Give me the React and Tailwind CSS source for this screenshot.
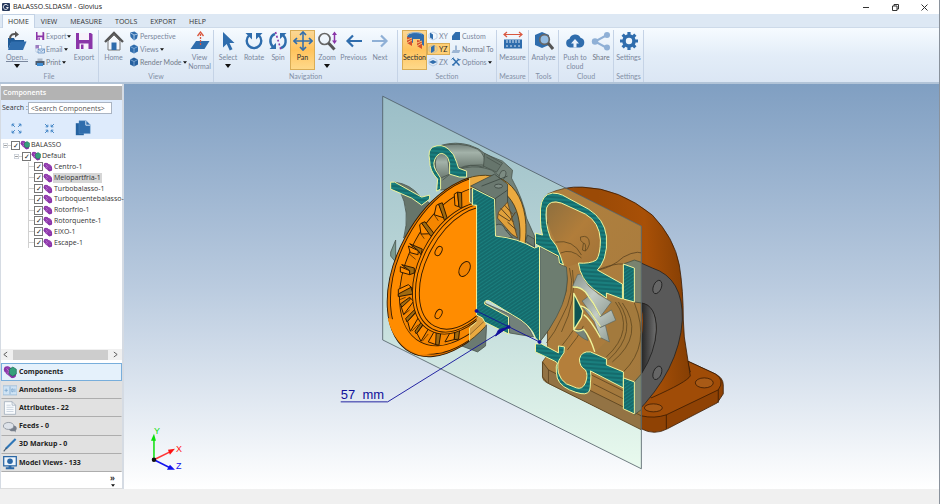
import { useState } from 'react';
import clsx from 'clsx';

const BLUE = '#2f6dad';
const PURPLE = '#8a35a8';

const tabs = ['HOME', 'VIEW', 'MEASURE', 'TOOLS', 'EXPORT', 'HELP'];

const parts = [
  'Centro-1',
  'Meiopartfria-1',
  'Turbobalasso-1',
  'Turboquentebalasso-',
  'Rotorfrio-1',
  'Rotorquente-1',
  'EIXO-1',
  'Escape-1',
];

/* ---------- icons ---------- */

const Svg = ({ size = 'size-5', box = 20, children }) => (
  <svg viewBox={`0 0 ${box} ${box}`} className={clsx('shrink-0', size)} fill="none" aria-hidden="true">
    {children}
  </svg>
);

const FolderIcon = () => (
  <Svg>
    <path d="M1 7h6l1 2h9v3H4L1 18z" fill="#1f5a96" />
    <path d="M4 10.500h15.500L16 19H1z" fill={BLUE} />
    <path d="M3 8C3 3.500 6 2.500 9 3" stroke="#555" strokeWidth="2" />
    <path d="M8 0l4 3.500L8 6.500z" fill="#555" />
  </Svg>
);

const SaveIcon = ({ size }) => (
  <Svg size={size}>
    <path d="M2 2h15l1.500 1.500V18H2z" fill={PURPLE} />
    <path d="M5 2h10v7H5z" fill="#f7f2fb" />
    <path d="M5.500 12.500h9V18h-9z" fill="#f7f2fb" />
    <path d="M7 13.500h2.500V18H7z" fill={PURPLE} />
  </Svg>
);

const MailIcon = () => (
  <Svg size="size-[10px]">
    <path d="M2 3h11v13H2z" fill="#fff" stroke="#8fa9cc" />
    <path d="M1 2h7v7H1z" fill="#9d7cc0" />
    <path d="M6 10h13v8H6z" fill="#d8e5f4" stroke="#5f8cc0" strokeWidth="1.500" />
    <path d="M6 10l6.500 5 6.500-5" stroke="#5f8cc0" strokeWidth="1.500" />
  </Svg>
);

const PrintIcon = () => (
  <Svg size="size-[10px]">
    <path d="M5 3h10v5H5z" fill="#a9b6c7" />
    <path d="M1 8h18v8H1z" fill="#4b5a6d" />
    <path d="M4 12h12v6H4z" fill="#3d8ad0" />
  </Svg>
);

const HomeIcon = () => (
  <Svg>
    <path d="M4 10v9h12v-9l-6-6z" fill="#f4f8fc" stroke="#777" />
    <path d="M1 11l9-9 9 9" stroke="#555" strokeWidth="2.300" />
    <path d="M7.500 11.500h5V19h-5z" fill={BLUE} />
  </Svg>
);

const CubeIcon = ({ tone = BLUE }) => (
  <Svg size="size-[10px]">
    <path d="M10 1l8 4v10l-8 4-8-4V5z" fill={tone} />
    <path d="M2 5l8 4 8-4M10 9v10" stroke="#a9cbec" strokeWidth="1.200" />
  </Svg>
);

const PerspectiveIcon = () => (
  <Svg size="size-[10px]">
    <path d="M2 3l9-2 7 5-2 9-6 4-7-7z" fill={BLUE} />
    <path d="M2 3l8 5 8-2M10 8v11" stroke="#cfe2f5" strokeWidth="1.500" />
  </Svg>
);

const ViewNormalIcon = () => (
  <Svg>
    <path d="M6 10h13.500L14.500 18H.5z" fill={BLUE} />
    <path d="M10.500 14V3" stroke="#d9573f" strokeWidth="1.300" strokeDasharray="2 1" />
    <path d="M7.500 5l3-4 3 4" stroke="#d9573f" strokeWidth="1.300" />
  </Svg>
);

const SelectIcon = () => (
  <Svg>
    <path d="M5 1v15.500l3.700-3.500 3 6.500 2.800-1.300-3-6.200h5z" fill={BLUE} />
  </Svg>
);

const RotateIcon = () => (
  <Svg>
    <path d="M5 4.500a7.300 7.300 0 1 0 10 0" stroke={BLUE} strokeWidth="2.400" />
    <path d="M1.500 2H8v6.500z" fill={BLUE} />
    <path d="M12 2h6.500L12 8.500z" fill={BLUE} />
  </Svg>
);

const SpinIcon = () => (
  <Svg>
    <path d="M7 3C1.500 5 1 12 5 16M13 17c5.500-2 6-9 2-13" stroke={BLUE} strokeWidth="2.400" />
    <path d="M1.500 18h6.500v-6zM18.500 2H12v6z" fill={BLUE} />
    <path d="M7.500 1l5.500 18" stroke={PURPLE} strokeWidth="1.600" strokeDasharray="2 2" />
  </Svg>
);

const PanIcon = () => (
  <Svg>
    <path d="M10 1v18M1 10h18" stroke={BLUE} strokeWidth="1.500" />
    <path d="M7 4l3-3 3 3M7 16l3 3 3-3M4 7l-3 3 3 3M16 7l3 3-3 3" stroke={BLUE} strokeWidth="1.700" />
  </Svg>
);

const ZoomIcon = () => (
  <Svg>
    <circle cx="7.500" cy="8" r="5.500" stroke="#666" strokeWidth="1.700" />
    <path d="M11.500 12l6 6.500" stroke="#555" strokeWidth="3" />
    <path d="M17.500 3v8" stroke={PURPLE} strokeWidth="1.500" />
    <path d="M15 4l2.500-3.500L20 4zM15 9.500l2.500 3.500L20 9.500z" fill={PURPLE} />
  </Svg>
);

const ArrowIcon = ({ back }) => (
  <Svg>
    <path
      d={back ? 'M18 10H4M9 4.500L3.500 10 9 15.500' : 'M2 10h14M11 4.500l5.500 5.500-5.500 5.500'}
      stroke={back ? BLUE : '#8fb0d6'}
      strokeWidth="2.200"
    />
  </Svg>
);

const SectionIcon = () => (
  <Svg>
    <path d="M2 6c1-5 14-6 17-2v11l-4-3V8H8v4l-6-3z" fill={BLUE} />
    <path d="M2 4c3-3 11-3 15-1" stroke="#88b3dd" />
    <path d="M2 6l5 1v8l-5-3zM12 9l5 1v8l-5-3z" fill="#d6532c" />
    <path d="M2 9l5-2M2 12l5-3M12 12l5-2M12 15l5-3" stroke="#f7c27a" />
  </Svg>
);

const PlaneIcon = ({ d }) => (
  <Svg size="size-[10px]">
    <path d="M2 6l8-4 8 4v8l-8 4-8-4z" stroke="#8eacd0" />
    <path d={d} fill={BLUE} />
  </Svg>
);

const BlockIcon = ({ d, tone = BLUE }) => (
  <Svg size="size-[10px]">
    <path d={d} fill={tone} />
  </Svg>
);

const OptionsIcon = () => (
  <Svg size="size-[10px]">
    <path d="M3 17L16 4M4 3l13 14" stroke={BLUE} strokeWidth="3" />
    <path d="M1 5l4-4M13 3l3 3 3-1M3 14l3 3" stroke={BLUE} strokeWidth="2" />
  </Svg>
);

const MeasureIcon = () => (
  <Svg>
    <path d="M1.500 3.500h17M4 1L1 3.500 4 6M16 1l3 2.500L16 6" stroke="#d9573f" strokeWidth="1.200" />
    <path d="M1 8.500h18v9H1z" fill={BLUE} />
    <path d="M4 9v3M7 9v3M10 9v3M13 9v3M16 9v3M4 16v-2M8 16v-2M12 16v-2M16 16v-2" stroke="#dbe7f5" />
  </Svg>
);

const AnalyzeIcon = () => (
  <Svg>
    <path d="M1 4l7-3 7 3v10l-7 3-7-3z" fill={BLUE} />
    <circle cx="10.500" cy="8.500" r="4.800" fill="#94bce2" stroke="#666" strokeWidth="1.700" />
    <path d="M14 12l5 6" stroke="#555" strokeWidth="3" />
  </Svg>
);

const CloudIcon = () => (
  <Svg>
    <path d="M5 16.500a4.500 4.500 0 0 1-.5-8.800 6 6 0 0 1 11-1 5 5 0 0 1-.5 9.800z" fill={BLUE} />
    <path d="M10 8l4 4.500h-2.500v4h-3v-4H6z" fill="#eaf2fb" />
  </Svg>
);

const ShareIcon = () => (
  <Svg>
    <path d="M16 4L4 10.500 16 17" stroke="#8fb0d6" strokeWidth="2" />
    <g fill="#8fb0d6">
      <circle cx="16" cy="4" r="3" />
      <circle cx="4" cy="10.500" r="3.200" />
      <circle cx="16" cy="16.500" r="3" />
    </g>
  </Svg>
);

const GearIcon = () => (
  <Svg>
    <circle cx="10" cy="10" r="5" stroke={BLUE} strokeWidth="3.600" />
    {[0, 45, 90, 135].map((a) => (
      <path key={a} d="M10 1v3.500M10 15.500V19" stroke={BLUE} strokeWidth="3.200" transform={`rotate(${a} 10 10)`} />
    ))}
  </Svg>
);

const PartIcon = ({ assembly, size = 'size-[10px]' }) => (
  <Svg size={size}>
    <circle cx="6" cy="6.500" r="4.800" fill={PURPLE} />
    <path d="M6 2l8 3 4 4v7l-5 3-9-7z" fill="#9440b0" />
    <circle cx="14" cy="14" r="4.500" fill={PURPLE} />
    <path d="M5 5l4 4-3 3M12 11l3 3" stroke="#c78ada" />
    {assembly && <path d="M9 6l5-3 5 3v7l-5 3-5-3z" fill="#35a07a" stroke="#1f6d58" />}
  </Svg>
);

const CollapseIcon = ({ inward }) => (
  <Svg size="size-[11px]">
    <path
      d={
        inward
          ? 'M2 2l5 5M7 3v4H3M18 2l-5 5M13 3v4h4M2 18l5-5M3 13h4v4M18 18l-5-5M17 13h-4v4'
          : 'M7 7L2 2M2 6V2h4M13 7l5-5M14 2h4v4M7 13l-5 5M2 14v4h4M13 13l5 5M18 14v4h-4'
      }
      stroke="#3f83c4"
      strokeWidth="1.800"
    />
  </Svg>
);

const CopyIcon = () => (
  <Svg size="size-4">
    <path d="M1 4h10v15H1z" fill="#2462a0" />
    <path d="M5 1h9l5 5v11H5z" fill={BLUE} stroke="#5b93c8" strokeWidth=".5" />
    <path d="M13.500 1v5.500H19" stroke="#dceafb" strokeWidth="1.200" />
  </Svg>
);

const AnnotationIcon = () => (
  <Svg size="size-[14px]">
    <path d="M0 4h20v13H0z" fill="#cfe3f4" stroke="#8fb4d4" />
    <path d="M10 5v11M2 10.500h5M4.500 8v5M12.500 8.500h2v4h-2zM17 8v5" stroke="#6f9cc5" />
  </Svg>
);

const PageIcon = () => (
  <Svg size="size-[14px]">
    <path d="M2 1h11l5 5v13H2z" fill="#fafcfe" stroke="#97a5b5" />
    <path d="M13 1v5h5" stroke="#97a5b5" />
    <path d="M5 6h6M5 9h10M5 12h10M5 15h10" stroke="#b9c6d4" />
  </Svg>
);

const FeedsIcon = () => (
  <Svg size="size-[14px]">
    <ellipse cx="14" cy="12" rx="5.500" ry="4" fill="#777f8b" />
    <path d="M15 14l3 4v-5z" fill="#777f8b" />
    <ellipse cx="8" cy="8.500" rx="7.500" ry="5" fill="#dde2e9" stroke="#7a828e" />
  </Svg>
);

const PencilIcon = () => (
  <Svg size="size-[14px]">
    <path d="M18 1.500L4 15.500" stroke="#2f77b8" strokeWidth="3" />
    <path d="M5 14l-4 5" stroke="#456" strokeWidth="1.500" />
  </Svg>
);

const MonitorIcon = () => (
  <Svg size="size-[14px]">
    <path d="M1 1h18v13H1z" fill="#eef5fc" stroke="#2b67a5" strokeWidth="1.800" />
    <circle cx="10" cy="7.500" r="4" fill="#2b67a5" />
    <path d="M8 14h4v2h4v3H4v-3h4z" fill="#2b67a5" />
  </Svg>
);

/* ---------- ribbon ---------- */

const Caret = ({ big }) => (
  <svg viewBox="0 0 6 4" className={big ? 'mt-[2px] w-[6px] h-1' : 'w-1 h-[3px] shrink-0'} aria-hidden="true">
    <path d="M0 0h6L3 4z" fill="#111" />
  </svg>
);

function BigButton({ icon, label, width, caret, active, strong }) {
  return (
    <button
      className={clsx(
        'h-[40px] flex flex-col items-center leading-[9px] text-center border',
        active ? 'bg-linear-to-b from-[#fbd794] via-[#ffc35c] to-[#fed98a] border-[#d9ac55] text-[#2b2b2b]' : 'border-transparent',
        strong && 'text-[#6f7786]',
        width,
      )}
    >
      {icon}
      <span className="mt-[2px] whitespace-pre">{label}</span>
      {caret && <Caret big />}
    </button>
  );
}

function SmallButton({ icon, label, caret, active, strong }) {
  return (
    <button
      className={clsx(
        'h-[12px] flex items-center gap-px whitespace-nowrap border',
        active ? 'bg-[#ffcf74] border-[#d9ac55] text-[#2b2b2b]' : 'border-transparent',
        strong && 'text-[#737b8a]',
      )}
    >
      {icon}
      <span>{label}</span>
      {caret && <Caret />}
    </button>
  );
}

function Group({ title, width, children }) {
  return (
    <section className={clsx('shrink-0 flex flex-col border-r border-[#c5d3e6] mt-[2px]', width)}>
      <div className="flex-1 flex">{children}</div>
      <h2 className="text-center leading-[12px] text-[#8390a6]">{title}</h2>
    </section>
  );
}

const Stack = ({ width, children }) => <div className={clsx('flex flex-col gap-px', width)}>{children}</div>;

function Ribbon() {
  return (
    <div className="h-[56px] shrink-0 flex font-['Lato',sans-serif] text-[7px] text-[#7a879d] bg-linear-to-b from-[#f6fbff] via-[#e3edf8] to-[#dbe6f4] border-b-2 border-[#b2c4d8]">
      <Group title="File" width="w-[99px]">
        <BigButton icon={<FolderIcon />} label={<u>Open...</u>} width="w-[34px]" caret />
        <Stack width="w-[38px]">
          <SmallButton icon={<SaveIcon size="size-[10px]" />} label="Export" caret />
          <SmallButton icon={<MailIcon />} label="Email" caret />
          <SmallButton icon={<PrintIcon />} label="Print" caret strong />
        </Stack>
        <BigButton icon={<SaveIcon />} label="Export" width="w-[24px]" />
      </Group>
      <Group title="View" width="w-[115px]">
        <BigButton icon={<HomeIcon />} label="Home" width="w-[29px]" />
        <Stack width="w-[58px]">
          <SmallButton icon={<PerspectiveIcon />} label="Perspective" />
          <SmallButton icon={<CubeIcon />} label="Views" caret />
          <SmallButton icon={<CubeIcon tone="#255f9e" />} label="Render Mode" caret strong />
        </Stack>
        <BigButton icon={<ViewNormalIcon />} label={'View\nNormal'} width="w-[27px]" />
      </Group>
      <Group title="Navigation" width="w-[184px]">
        <BigButton icon={<SelectIcon />} label="Select" width="w-[28px]" caret />
        <BigButton icon={<RotateIcon />} label="Rotate" width="w-[24px]" />
        <BigButton icon={<SpinIcon />} label="Spin" width="w-[24px]" />
        <BigButton icon={<PanIcon />} label="Pan" width="w-[25px]" active />
        <BigButton icon={<ZoomIcon />} label="Zoom" width="w-[24px]" caret />
        <BigButton icon={<ArrowIcon back />} label="Previous" width="w-[29px]" />
        <BigButton icon={<ArrowIcon />} label="Next" width="w-[24px]" />
      </Group>
      <Group title="Section" width="w-[99px]">
        <div className="flex pl-1">
          <BigButton icon={<SectionIcon />} label="Section" width="w-[25px]" active />
          <Stack width="w-[23px]">
            <SmallButton icon={<PlaneIcon d="M4 3l6 4v10l-6-4z" />} label="XY" />
            <SmallButton icon={<PlaneIcon d="M6 6l7-4v12l-7 4z" />} label="YZ" active />
            <SmallButton icon={<PlaneIcon d="M2 10l8-4 8 4-8 4z" />} label="ZX" />
          </Stack>
          <Stack>
            <SmallButton icon={<BlockIcon d="M2 10l7-8h9v16H2z" />} label="Custom" />
            <SmallButton icon={<BlockIcon tone="#9db6d4" d="M1 18l3-6h4V3h4v9h7l-3 6z" />} label="Normal To" strong />
            <SmallButton icon={<OptionsIcon />} label="Options" caret />
          </Stack>
        </div>
      </Group>
      <Group title="Measure" width="w-[32px]">
        <BigButton icon={<MeasureIcon />} label="Measure" width="w-[31px]" />
      </Group>
      <Group title="Tools" width="w-[30px]">
        <BigButton icon={<AnalyzeIcon />} label="Analyze" width="w-[29px]" />
      </Group>
      <Group title="Cloud" width="w-[55px]">
        <BigButton icon={<CloudIcon />} label={'Push to\ncloud'} width="w-[32px]" />
        <BigButton icon={<ShareIcon />} label="Share" width="w-[20px]" strong />
      </Group>
      <Group title="Settings" width="w-[30px]">
        <BigButton icon={<GearIcon />} label="Settings" width="w-[29px]" />
      </Group>
    </div>
  );
}

/* ---------- side panel ---------- */

const Expander = () => (
  <Svg size="size-[5px]" box={9}>
    <path d="M.5.5h8v8h-8z" fill="#fff" stroke="#9aa5b5" />
    <path d="M2 4.500h5" stroke="#444" />
  </Svg>
);

function TreeRow({ label, level, assembly, selected, onSelect }) {
  return (
    <li className="flex items-center whitespace-nowrap">
      {level === 0 && <span className="w-[2px] shrink-0" />}
      {level === 1 && <span className="w-[13px] shrink-0" />}
      {level === 2 && (
        <span className="ml-[27px] w-[6px] h-full shrink-0 border-l border-[#d0d0d0] flex items-center">
          <span className="w-full border-t border-[#d0d0d0]" />
        </span>
      )}
      {level < 2 && <Expander />}
      {level < 2 && <span className="w-[3px] shrink-0 border-t border-[#d0d0d0]" />}
      <label className="flex items-center">
        <input
          type="checkbox"
          defaultChecked
          className="appearance-none size-[9px] shrink-0 border border-[#777] bg-white flex items-center justify-center checked:before:content-['✓'] before:text-[7px] before:leading-[7px] before:text-[#222]"
        />
        <PartIcon assembly={assembly} />
        <span onClick={onSelect} className={clsx('px-px leading-[10px]', selected && 'bg-[#d6d6d6]')}>
          {label}
        </span>
      </label>
    </li>
  );
}

const panels = [
  { label: 'Components', icon: <PartIcon assembly size="size-[14px]" /> },
  { label: 'Annotations - 58', icon: <AnnotationIcon /> },
  { label: 'Attributes - 22', icon: <PageIcon /> },
  { label: 'Feeds - 0', icon: <FeedsIcon /> },
  { label: '3D Markup - 0', icon: <PencilIcon /> },
  { label: 'Model Views - 133', icon: <MonitorIcon /> },
];

function SidePanel() {
  const [selected, setSelected] = useState('Meiopartfria-1');
  const [open, setOpen] = useState('Components');

  return (
    <aside className="w-[124px] shrink-0 flex flex-col bg-white border-l border-r-2 border-[#d5dbe3] text-[7px] text-[#333]">
      <h2 className="mt-[2px] h-[14px] shrink-0 bg-[#b3b3b3] text-white font-semibold leading-[14px] px-[2px]">Components</h2>
      <div className="h-[39px] shrink-0 bg-[#deebfc]">
        <label className="flex items-center pl-[1px] pt-[2px]">
          Search :
          <input
            placeholder="<Search Components>"
            className="w-[84px] h-[12px] bg-white border border-[#aab4c2] px-[2px] placeholder:text-[#555]"
          />
        </label>
        <div className="flex items-center pl-[10px] pt-[6px]">
          <button aria-label="Expand all"><CollapseIcon /></button>
          <button aria-label="Collapse all" className="ml-[22px]"><CollapseIcon inward /></button>
          <button aria-label="Copy" className="ml-[20px]"><CopyIcon /></button>
        </div>
      </div>
      <ul className="mt-[1px] h-[108px] shrink-0 grid grid-rows-10">
        <TreeRow label="BALASSO" level={0} assembly />
        <TreeRow label="Default" level={1} assembly />
        {parts.map((part) => (
          <TreeRow key={part} label={part} level={2} selected={part === selected} onSelect={() => setSelected(part)} />
        ))}
      </ul>
      <div className="flex-1" />
      <div className="h-[11px] shrink-0 flex items-center justify-between pl-[2px] pr-1 bg-[#f0f0f0]">
        <svg viewBox="0 0 6 8" className="w-[5px] h-[7px]"><path d="M5 1L1 4l4 3" fill="none" stroke="#444" /></svg>
        <div className="w-[95px] h-[10px] bg-[#cdcdcd]" />
        <svg viewBox="0 0 6 8" className="w-[5px] h-[7px]"><path d="M1 1l4 3-4 3" fill="none" stroke="#444" /></svg>
      </div>
      <nav className="mt-[3px] h-[109px] shrink-0 grid grid-rows-6 font-bold text-[#222]">
        {panels.map(({ label, icon }) => (
          <button
            key={label}
            onClick={() => setOpen(label)}
            className={clsx(
              'flex items-center gap-[2px] pl-[1px] border',
              open === label ? 'bg-[#e5f1fb] border-[#78aedb]' : 'bg-[#e1e1e1] border-transparent border-b-[#adadad]',
            )}
          >
            {icon}
            {label}
          </button>
        ))}
      </nav>
      <div className="h-[17px] shrink-0 flex justify-end pr-[7px] border-b border-[#ddd]">
        <button aria-label="More panels" className="flex flex-col items-center text-[8px] leading-[12px] font-bold">
          »
          <Caret />
        </button>
      </div>
    </aside>
  );
}

/* ---------- 3D view ---------- */

// blades of the compressor wheel: lit face, then the shaded side
const vanes = [
  ['212 66 222 60 226 104 214 100', '222 60 234 62 235 110 226 104'],
  ['158 100 165 96 183 138 152 128', '165 96 176 92 190 136 183 146'],
  ['108 158 114 153 142 185 112 186', '114 153 124 149 151 184 142 193'],
  ['74 222 104 236 103 248 80 242', '78 215 116 231 112 248 104 236'],
  ['50 284 78 296 78 308 50 300', '54 278 92 288 92 303 78 308 78 296'],
  ['44 352 74 338 88 350 44 372', '44 366 82 346 88 366 44 374'],
  ['52 402 80 378 90 388 60 428', '50 396 78 376 80 382 54 406'],
  ['72 448 104 414 112 424 80 478', '66 440 98 408 102 414 70 450'],
  ['100 484 128 446 142 458 112 508', '94 478 120 440 126 446 98 486'],
  ['134 510 158 468 170 476 162 520', '158 476 172 480 166 520 156 518'],
  ['184 510 204 474 214 476 212 503', '214 476 228 474 225 502 212 503'],
];

const VOLUTE =
  'M536 233L543 235Q541 228 541 220V209Q542 194 553 193Q559 193 563 195L589 209Q605 219 607 236Q608 249 605 258Q602 266 598 270L623 284V299L607 293V298L594 289Q581 279 579 263Q590 264 597 260Q601 254 601 240Q600 222 586 214L562 203Q550 199 547 208Q545 222 551 238L557 246L561 256L564 265L560 263L559 256L536 244Z';

const VOLUTE_LOW =
  'M536 344H542L559 353V346L565 347Q566 353 561 358Q557 363 559 373Q561 380 567 384L577 388Q583 390 586 383Q589 375 586 370Q580 367 580 359Q582 351 591 352L607 359V365L624 372V388L591 371Q592 375 591 383Q591 392 588 393Q584 396 570 390Q557 384 557 373Q556 366 558 363L555 361L536 352Z';

const CORE =
  'M473 188L495 199L496 236Q518 238 535 248L540 246V342L536 338Q532 325 513 315L490 301Q485 299 485 304L509 317V334L485 322L483 318L477 315V205H473Z';

const HOUSING =
  'M548 194Q565 186 583 187Q620 188 653 215Q675 238 680 265Q685 290 684 320L686 340L691 376L688 361L716 375Q724 378 724 385V394L718 403L668 429Q655 436 642 429L548 383Q543 381 543 376V362L548 355Z';

function Model() {
  return (
    <svg viewBox="124 84 816 405" className="w-full h-full" role="img" aria-label="Turbocharger section">
      <defs>
        <linearGradient id="plane" x1="0" y1="0" x2="0" y2="1">
          <stop offset="0" stopColor="#9bbec7" />
          <stop offset=".5" stopColor="#bcd7d8" />
          <stop offset="1" stopColor="#e9faee" />
        </linearGradient>
        <linearGradient id="brown" gradientUnits="userSpaceOnUse" x1="600" y1="220" x2="690" y2="215">
          <stop offset="0" stopColor="#9b4a06" />
          <stop offset=".5" stopColor="#a85007" />
          <stop offset="1" stopColor="#7e3b03" />
        </linearGradient>
        <linearGradient id="tan" x1="0" y1="0" x2="1" y2="1">
          <stop offset="0" stopColor="#b0813f" />
          <stop offset=".55" stopColor="#a97b3d" />
          <stop offset="1" stopColor="#8b7140" />
        </linearGradient>
        <linearGradient id="cavity" x1="0" y1="0" x2="1" y2="1">
          <stop offset="0" stopColor="#8e6f3e" />
          <stop offset=".5" stopColor="#b17d3a" />
          <stop offset="1" stopColor="#a07238" />
        </linearGradient>
        <linearGradient id="steel" x1="0" y1="0" x2="0" y2="1">
          <stop offset="0" stopColor="#72807a" />
          <stop offset=".35" stopColor="#a3b2a9" />
          <stop offset="1" stopColor="#6d7b72" />
        </linearGradient>
        <linearGradient id="blade" x1="0" y1="0" x2="1" y2="1">
          <stop offset="0" stopColor="#87928b" />
          <stop offset=".5" stopColor="#c3ccc6" />
          <stop offset="1" stopColor="#8f9c94" />
        </linearGradient>
        <linearGradient id="bore" x1="0" y1="0" x2="1" y2="0">
          <stop offset="0" stopColor="#252525" />
          <stop offset="1" stopColor="#707070" />
        </linearGradient>
        <pattern id="hatch" width="4" height="3" patternUnits="userSpaceOnUse" patternTransform="rotate(-34)">
          <rect width="4" height="3" fill="#1a7f7e" />
          <path d="M0 1H4" stroke="#0b4549" strokeWidth=".7" />
        </pattern>
        <pattern id="hatchFlat" width="8" height="4" patternUnits="userSpaceOnUse" patternTransform="rotate(4)">
          <rect width="8" height="4" fill="#1a7f7e" />
          <path d="M0 2H8" stroke="#0b4549" strokeWidth=".7" />
        </pattern>
        <clipPath id="behind"><path d="M383 96L642 226V469L383 340Z" /></clipPath>
        <clipPath id="front"><path d="M380 150H470V360H380Z" /></clipPath>
        <clipPath id="hubCut"><path d="M380 150H477V360H380Z" /></clipPath>
        <clipPath id="rimBack"><path d="M470 150H540V246H470ZM470 300H486V360H470Z" /></clipPath>
      </defs>

      {/* turbine housing, outside the section plane */}
      <g stroke="#3a1b02" strokeWidth=".8" strokeLinejoin="round">
        <path d="M660 387L691 372L688 361L716 374Q724 378 724 385V394L718 403L668 429Q655 436 642 429V395Z" fill="#8f4204" />
        <path d="M660 387L691 372L688 361L716 374Q726 380 719 390L667 415Q655 419 642 416V397Z" fill="#a04c07" />
        <path d="M667 415V429M719 390V403" fill="none" />
        <path d="M548 194Q565 186 583 187Q620 188 653 215Q675 238 680 265Q684 290 684 320L685 337L691 376Q688 382 652 398L600 330Z" fill="url(#brown)" />
        <ellipse cx="654" cy="408" rx="9" ry="4" fill="#a85a16" />
        <ellipse cx="705" cy="383" rx="9" ry="5" fill="#a85a16" />
      </g>
      <path
        d="M624 264L635 260L653 268Q684 278 683 320Q680 370 635 415L624 408V378L635 380Q657 352 657 328Q656 305 642 303L635 302Z"
        fill="#595959" stroke="#222" strokeWidth=".8"
      />
      <path d="M642 303Q657 305 657 330Q656 352 642 374Z" fill="url(#bore)" stroke="#1d1d1d" strokeWidth=".8" />
      <path d="M642 308Q645 318 642 340Z" fill="#a84c05" />
      <g fill="#666" stroke="#1d1d1d" strokeWidth=".8">
        <ellipse cx="658" cy="287" rx="4" ry="7" transform="rotate(22 658 287)" />
        <ellipse cx="658" cy="373" rx="4" ry="7" transform="rotate(22 658 373)" />
      </g>

      {/* section plane */}
      <path d="M383 96L642 226V469L383 340Z" fill="url(#plane)" />

      <g clipPath="url(#behind)">
        <path d={HOUSING} fill="url(#tan)" stroke="#5c431f" strokeWidth=".8" />
        <path d="M543 362L549 370L642 416V430L548 383L543 377Z" fill="#937344" stroke="#57401d" strokeWidth=".8" />
        <path d="M549 370V383M590 374L642 400M594 384L642 408" fill="none" stroke="#5c431f" strokeWidth=".8" />
        <path d="M624 264L635 260L647 264V406L635 415V382L642 374V303L635 302Z" fill="#79836f" stroke="#47503f" strokeWidth=".8" />
        <path d="M598 270Q612 268 624 257Q640 248 648 256M598 270Q615 263 624 264" fill="none" stroke="#5c431f" strokeWidth=".8" />
        <path d="M611 298Q640 300 642 322Q644 355 624 372L596 352L608 340Z" fill="#a37a3d" />
        <path d="M616 302Q636 330 607 357M619 302Q640 332 609 360M623 303Q646 335 613 362M635 303Q652 345 624 372" fill="none" stroke="#604720" strokeWidth=".8" />
      </g>

      {/* volute cavity */}
      <path d="M547 205Q556 197 588 215Q602 224 602 242Q602 262 588 264L580 263L567 267L557 243Q545 222 547 205Z" fill="url(#cavity)" />
      <path d="M556 242Q574 239 582 255M561 253Q572 248 582 258M566 267Q572 290 558 312Q552 328 541 341M570 268Q577 292 562 318Q556 332 547 343M573 270Q578 300 562 332" fill="none" stroke="#604720" strokeWidth=".8" />
      <path d="M581 237Q590 234 590 244Q588 250 586 251Q587 243 584 243Q580 241 581 237M584 243L583 250L586 251" fill="none" stroke="#604720" strokeWidth=".8" />
      <path d="M541 247L559 257L560 264L567 267Q571 292 557 317Q550 330 541 341Z" fill="#6d7d70" stroke="#3f4b42" strokeWidth=".6" />
      <path d="M560 356Q572 345 575 331Q588 330 595 352Q581 351 580 360Q581 367 587 371Q589 387 580 388Q562 385 559 372Z" fill="#b47f3b" />
      <path d="M563 345Q575 330 581 318M568 350Q579 337 584 326" fill="none" stroke="#604720" strokeWidth=".8" />

      {/* turbine wheel */}
      <g transform="translate(536 186) scale(.3333)" strokeLinejoin="round">
        <g stroke="#59655e" strokeWidth="2" fill="url(#blade)">
          <path d="M126 266L112 300L145 312L166 345L195 392L228 348L190 325L160 300L136 264Z" />
          <path d="M140 345L176 395L195 425L241 403L228 372L195 392L160 330Z" />
          <path d="M140 362L176 406L195 455L222 468L210 418L195 425L165 375Z" />
          <path d="M115 432L146 430L158 464Q138 458 115 432Z" fill="#76857a" />
        </g>
        <path d="M115 322L142 375L138 395L115 432Z" fill="#0e5553" />
        <path
          d="M112 303Q135 302 150 318Q175 350 195 390M115 432V322L142 375L138 395L115 432M136 360Q158 366 170 385L195 422M145 386Q165 400 195 455M115 432Q130 440 145 430Q165 455 178 498"
          fill="none" stroke="#eef39a" strokeWidth="4"
        />
      </g>

      {/* compressor cover */}
      <g stroke="#49544d" strokeWidth=".8">
        <path d="M395 182Q411 184 420 196L430 203L404 238Q411 212 400 190Z" fill="#66756b" />
        <path d="M391 252L396 240V262L391 256Z" fill="#7a9a90" />
        <path d="M442 145Q456 141 470 145Q480 148 486 154L503 161L513 170L512 178Q524 200 527 218L535 236V248L496 236L470 185L441 190V178L433 160Z" fill="#74837a" />
        <path d="M436 147Q460 140 478 149Q488 156 484 167Q470 163 460 168L450 150Z" fill="url(#steel)" />
        <path d="M437 156Q442 150 448 157L450 174L441 178Q433 168 437 156Z" fill="url(#steel)" />
        <path d="M443 180Q465 160 492 170Q516 184 522 215M450 174Q470 160 494 167" fill="none" />
        <path d="M485 153L503 163L497 172L484 166ZM487 157L501 165" fill="#66756c" />
        <ellipse cx="503" cy="175" rx="3" ry="5" transform="rotate(20 503 175)" fill="#7c8b82" />
        <path d="M462 346L478 352L486 346L487 325L470 335Z" fill="#6b7a71" />
        <path d="M485 303L512 315Q528 322 534 337L510 333V318L490 309Z" fill="#72817a" />
      </g>

      {/* wheel rim behind the plane */}
      <g clipPath="url(#rimBack)">
        <ellipse cx="457" cy="266" rx="98" ry="59" transform="rotate(-62 457 266)" fill="#ebaa40" stroke="#4e3c17" strokeWidth=".8" />
        <ellipse cx="460" cy="266" rx="86" ry="51" transform="rotate(-62 460 266)" fill="#66756c" stroke="#4e3c17" strokeWidth=".8" />
      </g>
      <path d="M470 335L486 320V304L477 318L470 322Z" fill="#d9a044" stroke="#5c431f" strokeWidth=".6" />
      <path d="M471 186L495 174L508 184V230L496 236V199L471 186Z" fill="#6a786f" stroke="#333d37" strokeWidth=".7" />
      <path d="M482 186L508 176M495 199L508 190" stroke="#333d37" strokeWidth=".7" />
      <ellipse cx="499" cy="186" rx="4" ry="2" fill="#7e8c84" stroke="#333d37" strokeWidth=".7" />
      <path d="M499 212L508 202L518 238L512 234L498 218Z" fill="#dfa03b" stroke="#5c431f" strokeWidth=".8" />
      <path d="M501 208L514 222M499 214L510 221L516 212M505 205L513 214M508 222L517 230" fill="none" stroke="#5c431f" strokeWidth="1" />
      <path d="M496 236V225Q503 222 506 230L513 238Z" fill="#7d8c83" stroke="#333d37" strokeWidth=".7" />
      <path d="M528 235L535 239V247L526 241Z" fill="#6a786f" stroke="#333d37" strokeWidth=".6" />

      {/* cut faces of the cover */}
      <g fill="url(#hatchFlat)" stroke="#f0f59d" strokeWidth="1" strokeLinejoin="round">
        <path d="M437 191L438 179Q430 171 430 160Q428 150 433 147Q442 143 449 149Q455 154 457 162L459 168L467 171V177L460 177L450 174V163L448 157Q442 150 437 156Q432 163 436 170L441 178V189Z" />
        <path d="M391 182H395L422 197L430 195V199L422 205L412 198L391 189Z" />
      </g>

      {/* compressor wheel, front half */}
      <g clipPath="url(#front)" stroke="#2f1800" strokeWidth=".9">
        <ellipse cx="457" cy="266" rx="98" ry="59" transform="rotate(-62 457 266)" fill="#e87b00" />
        <ellipse cx="459" cy="265" rx="96" ry="58" transform="rotate(-62 459 265)" fill="#ff8c00" />
        <ellipse cx="461" cy="266" rx="86" ry="52" transform="rotate(-62 461 266)" fill="#f58600" />
        <g transform="translate(384 172) scale(.3333)" strokeWidth="3" strokeLinejoin="round">
          {vanes.map(([face, side]) => (
            <g key={face}>
              <polygon points={face} fill="#ff8c00" />
              <polygon points={side} fill="#a06a10" />
            </g>
          ))}
          <path d="M92 300L98 345M90 352L108 395M94 386L132 430M112 424L150 455M142 458L178 474M76 245L96 262M112 186L122 200M152 128L164 146M46 384L66 376M60 428L78 414M84 478L104 458M116 508L134 486" fill="none" strokeWidth="2" />
        </g>
      </g>
      <g clipPath="url(#hubCut)" fill="#ff8c00" stroke="#2f1800" strokeWidth=".9">
        <ellipse cx="464" cy="268" rx="71" ry="44" transform="rotate(-62 464 268)" />
        <ellipse cx="465" cy="268" rx="69" ry="42" transform="rotate(-62 465 268)" />
        <ellipse cx="466" cy="268" rx="66" ry="39" transform="rotate(-62 466 268)" />
        <ellipse cx="465" cy="269" rx="8" ry="5" transform="rotate(-62 465 269)" fill="#f28300" />
        <ellipse cx="439" cy="251" rx="5" ry="3" transform="rotate(-62 439 251)" />
        <ellipse cx="439" cy="314" rx="5" ry="3" transform="rotate(-62 439 314)" />
      </g>
      <path d="M470 178V202L477 206M470 341V328L477 322" fill="none" stroke="#f0f59d" strokeWidth=".8" />

      {/* cut faces of shaft and turbine housing */}
      <g stroke="#f0f59d" strokeWidth="1" strokeLinejoin="round">
        <path d={CORE} fill="url(#hatch)" />
        <path d={VOLUTE} fill="url(#hatchFlat)" />
        <path d={VOLUTE_LOW} fill="url(#hatchFlat)" />
        <path d="M624 264L635 268V302L624 299ZM624 378L635 382V414L624 409Z" fill="url(#hatch)" />
      </g>
      <path d="M383 96L642 226V469L383 340V96" fill="none" stroke="#4d5a62" strokeWidth=".8" />
      <path d="M388 318Q394 346 420 355L445 352Q410 352 396 320Z" fill="#ff8c00" />

      {/* dimension */}
      <g stroke="#10109a" fill="#10109a">
        <path d="M477 311L540 342M341 402H388L509 327" fill="none" strokeWidth=".9" />
        <path d="M509 327L499 330L496 336Z" />
        <circle cx="477" cy="311" r="1.500" />
        <circle cx="509" cy="327" r="1.500" />
        <circle cx="540" cy="342" r="1.500" />
      </g>
      <text x="341" y="399" fill="#10109a" className="text-[13px] font-['Liberation_Sans',sans-serif]">57{'\u00a0\u00a0'}mm</text>

      {/* axes */}
      <g strokeWidth="1.500">
        <path d="M154 460V440" stroke="#0be00b" />
        <path d="M151 441L154 434L156 441Z" fill="#0be00b" />
        <path d="M154 460L170 452" stroke="#f33" />
        <path d="M168 450L175 449L170 455Z" fill="#f11" />
        <path d="M154 460L170 468" stroke="#11e" />
        <path d="M170 465L175 470L167 470Z" fill="#11e" />
        <circle cx="154" cy="460" r="1.500" fill="#111" stroke="#111" />
      </g>
      <g className="text-[9px] font-['Liberation_Sans',sans-serif]">
        <text x="154" y="434" fill="#0be00b">Y</text>
        <text x="176" y="452" fill="#f11">X</text>
        <text x="176" y="469" fill="#11e">Z</text>
      </g>
    </svg>
  );
}

/* ---------- window ---------- */

export default function App() {
  const [tab, setTab] = useState('HOME');

  return (
    <div className="h-screen flex flex-col bg-[#f0f0f0] border-r border-[#8a929c] overflow-hidden font-['Open_Sans',sans-serif]">
      <header className="h-[14px] shrink-0 flex items-center bg-white text-[7px] text-[#222]">
        <svg viewBox="0 0 16 16" className="ml-[2px] mr-[3px] size-[8px]" aria-hidden="true">
          <rect width="16" height="16" rx="2" fill="#27395c" />
          <path d="M12 5.500A5 5 0 1 0 12.500 9H8.500" fill="none" stroke="#fff" strokeWidth="1.800" />
        </svg>
        <h1>BALASSO.SLDASM - Glovius</h1>
        <div className="ml-auto flex items-center gap-[22px] pr-[11px]">
          <button aria-label="Minimize">
            <svg viewBox="0 0 7 7" className="size-[7px]"><path d="M0 3.500h6" stroke="#333" /></svg>
          </button>
          <button aria-label="Restore">
            <svg viewBox="0 0 7 7" className="size-[7px]" fill="none" stroke="#333"><path d="M.5 2h4.500v4.500H.5zM2 2V.5h4.500V5H5" /></svg>
          </button>
          <button aria-label="Close">
            <svg viewBox="0 0 7 7" className="size-[7px]"><path d="M.5.5l6 6M6.500.5l-6 6" stroke="#333" /></svg>
          </button>
        </div>
      </header>
      <nav className="h-[14px] shrink-0 flex bg-[#dde8f4] border-b border-[#cddae9] pl-[2px] text-[7px] text-[#333] leading-[14px]">
        {tabs.map((name) => (
          <button
            key={name}
            onClick={() => setTab(name)}
            className={clsx(
              'h-[14px] border-x border-t',
              tab === name ? 'px-[5px] bg-[#f6fbff] border-[#c3d2e5]' : 'px-[5px] mr-px border-transparent',
            )}
          >
            {name}
          </button>
        ))}
      </nav>
      <Ribbon />
      <div className="flex-1 min-h-0 flex">
        <SidePanel />
        <main className="flex-1 min-w-0 bg-linear-to-b from-[#809fc2] via-[#bacbdf] to-white">
          <Model />
        </main>
      </div>
      <footer className="h-[15px] shrink-0 bg-[#f0f0f0]" />
    </div>
  );
}
